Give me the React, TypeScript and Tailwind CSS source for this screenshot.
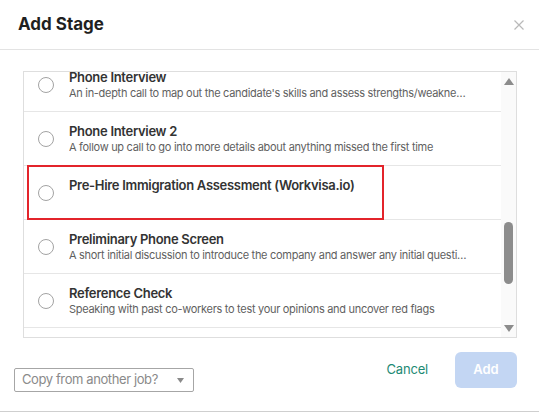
import React from "react";

type Stage = {
    title: string;
    description: string;
};

const stages: Stage[] = [
    {
        title: "Phone Interview",
        description:
            "An in-depth call to map out the candidate's skills and assess strengths/weaknesses and overall fit for the role",
    },
    {
        title: "Phone Interview 2",
        description: "A follow up call to go into more details about anything missed the first time",
    },
    { title: "Pre-Hire Immigration Assessment (Workvisa.io)", description: "" },
    {
        title: "Preliminary Phone Screen",
        description:
            "A short initial discussion to introduce the company and answer any initial questions from the candidate",
    },
    {
        title: "Reference Check",
        description: "Speaking with past co-workers to test your opinions and uncover red flags",
    },
    { title: "Skills Test", description: "A practical exercise to check the candidate's abilities" },
];

function StageRow({ stage }: { stage: Stage }) {
    return (
        <div className="flex h-[54px] shrink-0 items-center border-b border-[#e6e6e6] pl-[14px] pr-[30px]">
            <span className="h-[16px] w-[16px] shrink-0 rounded-full border border-[#a3a3a3] bg-white" />
            <div className="ml-[15px] min-w-0 flex-1">
                <p className="truncate text-[13px] font-semibold leading-[16px] tracking-[-0.3px] text-[#333333]">
                    {stage.title}
                </p>
                <p className="mt-[1px] h-[14px] truncate text-[11px] leading-[14px] tracking-[-0.3px] text-[#5f5f5f]">
                    {stage.description}
                </p>
            </div>
        </div>
    );
}

function Scrollbar() {
    return (
        <div className="flex w-[15px] shrink-0 flex-col items-center bg-[#fafafa]">
            <svg width="10" height="7" viewBox="0 0 10 7" className="mt-[6px]">
                <path d="M5 0 L10 7 L0 7 Z" fill="#8c8c8c" />
            </svg>
            <div className="mt-[137px] h-[62px] w-[9px] rounded-full bg-[#8c8c8c]" />
            <div className="flex-1" />
            <svg width="10" height="7" viewBox="0 0 10 7" className="mb-[5px]">
                <path d="M0 0 L10 0 L5 7 Z" fill="#8c8c8c" />
            </svg>
        </div>
    );
}

export default function App() {
    return (
        <div
            className="flex h-[412px] w-[539px] flex-col border-b border-[#cfcfcf] bg-white"
            style={{ fontFamily: "Inter, 'Noto Sans', sans-serif" }}
        >
            <div className="flex h-[50px] shrink-0 items-center justify-between border-b border-[#e3e3e3] pl-[18px] pr-[15px]">
                <h2 className="text-[17px] font-bold text-[#1f1f1f]">Add Stage</h2>
                <svg width="10" height="10" viewBox="0 0 10 10">
                    <path d="M0.5 0.5 L9.5 9.5 M9.5 0.5 L0.5 9.5" stroke="#b9b9b9" strokeWidth="1.2" />
                </svg>
            </div>

            <div className="relative ml-[23px] mr-[22px] mt-[21px] flex h-[267px] shrink-0 border border-[#dedede]">
                <div className="flex min-w-0 flex-1 flex-col overflow-hidden">
                    <div className="-mt-[14px] flex flex-col">
                        {stages.map((stage) => (
                            <StageRow key={stage.title} stage={stage} />
                        ))}
                    </div>
                </div>
                <Scrollbar />
                <div className="pointer-events-none absolute left-[3px] top-[93px] h-[55px] w-[357px] border-2 border-[#e3242b]" />
            </div>

            <div className="flex flex-1 justify-between pl-[14px] pr-[22px] pt-[14px]">
                <div className="mt-[16px] flex h-[24px] w-[180px] items-center justify-between rounded-[2px] border border-[#a6a6a6] pl-[7px] pr-[9px]">
                    <span className="text-[13px] tracking-[-0.4px] text-[#8a8a8a]">Copy from another job?</span>
                    <svg width="7" height="5" viewBox="0 0 7 5">
                        <path d="M0 0 L7 0 L3.5 5 Z" fill="#8a8a8a" />
                    </svg>
                </div>
                <div className="flex h-[36px] items-center gap-[27px]">
                    <button className="text-[13px] tracking-[-0.2px] text-[#1d8a74]">Cancel</button>
                    <button className="h-[36px] w-[62px] rounded-[6px] bg-[#c3d6f3] text-[13px] font-semibold text-white">
                        Add
                    </button>
                </div>
            </div>
        </div>
    );
}
